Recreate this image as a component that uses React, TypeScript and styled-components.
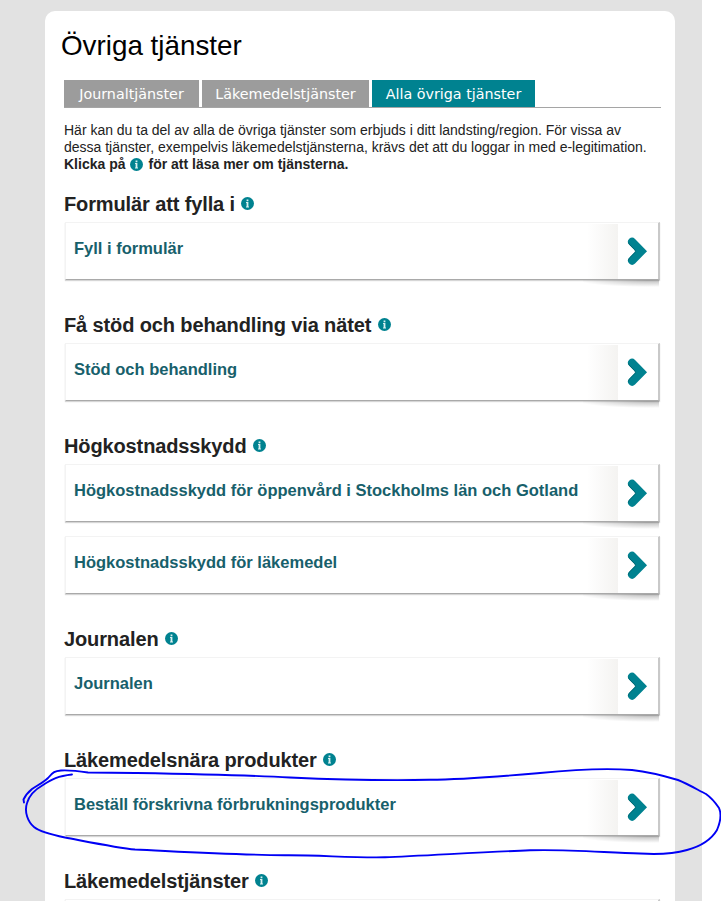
import React from 'react';
import styled, { createGlobalStyle } from 'styled-components';

const GlobalStyle = createGlobalStyle`
  * { box-sizing: border-box; }
  html, body { margin: 0; padding: 0; height: 901px; overflow: hidden; background: #fff; }
  body { font-family: "Liberation Sans", Arial, sans-serif; color: #222; }
`;

const Page = styled.div`
  position: relative;
  width: 721px;
  height: 901px;
  overflow: hidden;
`;

const Backdrop = styled.div`
  width: 702px;
  height: 901px;
  padding: 11px 27px 0 45px;
  background: #e2e2e2;
  overflow: hidden;
`;

const Panel = styled.main`
  height: 920px;
  padding: 18px 14px 0 19px;
  background: #fff;
  border-radius: 10px 10px 0 0;
`;

const Title = styled.h1`
  margin: 0 0 0 -3px;
  height: 51px;
  font-size: 27.8px;
  line-height: 33px;
  font-weight: 400;
  color: #000;
  white-space: nowrap;
`;

const Tabs = styled.nav`
  display: flex;
  gap: 3px;
  height: 28px;
  width: 597px;
  border-bottom: 1px solid #a5a5a5;
`;

const Tab = styled.button<{ $active?: boolean; $width: number }>`
  width: ${(p) => p.$width}px;
  height: 27px;
  padding: 1px 0 0;
  border: 0;
  background: ${(p) => (p.$active ? '#008290' : '#9c9c9c')};
  color: #fff;
  font: 14.3px/26px Verdana, "DejaVu Sans", sans-serif;
  white-space: nowrap;
`;

const Intro = styled.p`
  margin: 14px 0 0;
  font-size: 14px;
  line-height: 17px;
  white-space: nowrap;
`;

const IntroLine = styled.span`
  display: block;
  height: 17px;
  letter-spacing: -0.01px;
`;

const IntroStrong = styled.strong`
  display: flex;
  align-items: center;
  height: 17px;
  gap: 5px;
`;

const Sections = styled.div`
  padding-top: 21px;
`;

const Section = styled.section`
  padding-bottom: 21px;
`;

const Heading = styled.h2`
  display: flex;
  align-items: center;
  gap: 6.5px;
  height: 28px;
  margin: 0;
  padding-bottom: 9px;
  font-size: 20px;
  line-height: 20px;
  font-weight: 700;
  letter-spacing: -0.12px;
  white-space: nowrap;
`;

const Service = styled.a`
  position: relative;
  display: flex;
  justify-content: space-between;
  width: 595px;
  height: 58px;
  margin: 0 0 14px 1px;
  border: 1px solid #f3f3f3;
  border-right: 2px solid #c9c9c9;
  border-bottom: 1px solid #a9a9a9;
  background: #fff;
  box-shadow: 0 1px 1px rgba(0, 0, 0, 0.16);
  color: #17606b;
  font-size: 16.5px;
  font-weight: 700;
  line-height: 20px;
  text-decoration: none;

  &::after {
    content: '';
    position: absolute;
    right: -1px;
    top: 57px;
    width: 76px;
    height: 7px;
    background: radial-gradient(ellipse 72px 7px at 88% 0, rgba(0, 0, 0, 0.26), transparent);
  }
`;

const ServiceName = styled.span`
  padding: 15px 0 0 8px;
  white-space: nowrap;
`;

const Action = styled.span`
  display: flex;
  width: 71px;
  height: 55px;
  margin-top: 1px;
`;

const Fade = styled.span`
  width: 31px;
  background: linear-gradient(to right, #fff, #f4f3f1);
`;

const ChevronBox = styled.span`
  width: 40px;
  padding: 12px 0 0 9px;
`;

const Ink = styled.svg`
  position: absolute;
  left: 0;
  top: 0;
  pointer-events: none;
`;

function Info() {
  return (
    <svg width="13" height="13" viewBox="0 0 13 13" aria-hidden="true">
      <circle cx="6.5" cy="6.5" r="6.5" fill="#008290" />
      <path d="M5.6 2.6h1.8v1.6h-1.8zM5 5.1h2.4v4.3H8v1H5v-1h.6V6.1H5z" fill="#d9f0f1" />
    </svg>
  );
}

function Chevron() {
  return (
    <svg width="22" height="30" viewBox="0 0 22 30" aria-hidden="true">
      <path
        d="M5.1 5.8L14.3 15.2L5.1 24.6"
        fill="none"
        stroke="#008290"
        strokeWidth="8.2"
        strokeLinecap="round"
        strokeLinejoin="miter"
      />
      <path
        d="M1.5 6.4Q1.8 7.8 2.8 8.8L7.9 13.8Q9.1 15.2 7.9 16.6L2.7 21.8Q1.5 23 1.5 24.6"
        fill="none"
        stroke="#006570"
        strokeWidth="0.9"
      />
    </svg>
  );
}

const groups = [
  { title: 'Formulär att fylla i', services: ['Fyll i formulär'] },
  { title: 'Få stöd och behandling via nätet', services: ['Stöd och behandling'] },
  {
    title: 'Högkostnadsskydd',
    services: [
      'Högkostnadsskydd för öppenvård i Stockholms län och Gotland',
      'Högkostnadsskydd för läkemedel',
    ],
  },
  { title: 'Journalen', services: ['Journalen'] },
  { title: 'Läkemedelsnära produkter', services: ['Beställ förskrivna förbrukningsprodukter'] },
  { title: 'Läkemedelstjänster', services: [''] },
];

export default function App() {
  return (
    <Page>
      <GlobalStyle />
      <Backdrop>
        <Panel>
          <Title>Övriga tjänster</Title>
          <Tabs>
            <Tab $width={135}>Journaltjänster</Tab>
            <Tab $width={167}>Läkemedelstjänster</Tab>
            <Tab $width={163} $active>Alla övriga tjänster</Tab>
          </Tabs>
          <Intro>
            <IntroLine>
              Här kan du ta del av alla de övriga tjänster som erbjuds i ditt landsting/region. För vissa av
            </IntroLine>
            <IntroLine>
              dessa tjänster, exempelvis läkemedelstjänsterna, krävs det att du loggar in med e-legitimation.
            </IntroLine>
            <IntroStrong>
              <span>Klicka på</span>
              <Info />
              <span>för att läsa mer om tjänsterna.</span>
            </IntroStrong>
          </Intro>
          <Sections>
            {groups.map((group) => (
              <Section key={group.title}>
                <Heading>
                  <span>{group.title}</span>
                  <Info />
                </Heading>
                {group.services.map((name) => (
                  <Service key={name}>
                    <ServiceName>{name}</ServiceName>
                    <Action>
                      <Fade />
                      <ChevronBox>
                        <Chevron />
                      </ChevronBox>
                    </Action>
                  </Service>
                ))}
              </Section>
            ))}
          </Sections>
        </Panel>
      </Backdrop>
      <Ink width="721" height="901" viewBox="0 0 721 901" fill="none" aria-hidden="true">
        <path
          d="M24 802.5L23.5 799.5Q26 794 32 789C38 785 44 782 48 778C53 772 55 771 61 770.5C70 770 78 771 88 772.5L135 773C190 774 246 775 290 777.5C330 779.3 390 780.5 430 779.8C465 779.5 505 776 540 773C570 770 605 768 632 770C650 772 668 777 678 780C688 784 698 790 706 794C713 799 717 805 719 808C722 815 720 823 717 830C711 840 702 846 687 850C673 854 656 854.5 640 853.5C605 852.5 565 849 530 850.3C485 852 420 856 385 857.3C350 858 320 855 285 855.3C225 854.5 170 851 135 849.5C118 848 84 841 65 837.5C53 835 39 831 34 827C28 822 24 812 27 803C29 796 36 789 43 785C52 779 58 776 72 774.5"
          stroke="#0000f5"
          strokeWidth="1.9"
          strokeLinecap="round"
          strokeLinejoin="round"
        />
      </Ink>
    </Page>
  );
}
